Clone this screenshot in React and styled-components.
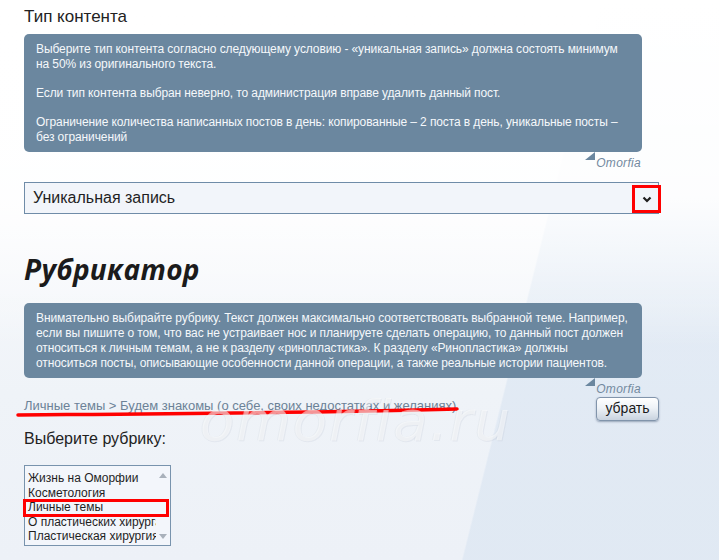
import React from 'react';
import styled, { createGlobalStyle } from 'styled-components';

const GlobalStyle = createGlobalStyle`
  html, body {
    margin: 0;
    padding: 0;
  }
  body {
    width: 719px;
    height: 560px;
    overflow: hidden;
    font-family: 'Liberation Sans', Arial, sans-serif;
    color: #222;
    background:
      linear-gradient(180deg, #ffffff 0%, rgba(255, 255, 255, 0.9) 35%, rgba(255, 255, 255, 0) 62%),
      linear-gradient(104deg, rgba(255, 255, 255, 0) 0%, rgba(255, 255, 255, 0) 70%, rgba(212, 225, 240, 0.5) 70.2%, rgba(212, 225, 240, 0.5) 100%),
      linear-gradient(180deg, #ffffff 0%, #f6f8fb 40%, #eff3f8 70%, #edf1f7 100%);
  }
`;

const Page = styled.div`
  position: relative;
  width: 635px;
  padding: 7px 0 0 24px;
`;

const SectionTitle = styled.div`
  font-size: 17px;
  line-height: 20px;
  color: #222;
`;

const Bubble = styled.div`
  position: relative;
  margin-top: ${(p) => p.$gap}px;
  width: 598px;
  padding: 8px 8px 7px 12px;
  background: #6b879f;
  border-radius: 5px;
  color: #f5f8fb;
  font-size: 12px;
  line-height: 15px;
  letter-spacing: -0.1px;

  p {
    margin: 0;
  }
  p + p {
    margin-top: 14px;
  }

  &::after {
    content: '';
    position: absolute;
    right: 47px;
    bottom: -8px;
    border-style: solid;
    border-width: 0 10px 8px 0;
    border-color: transparent #6b879f transparent transparent;
    transform: scaleY(-1);
  }
`;

const Signature = styled.div`
  margin-top: 3px;
  padding-right: 1px;
  width: 617px;
  text-align: right;
  font-size: 12px;
  line-height: 16px;
  font-style: italic;
  letter-spacing: 0.3px;
  color: #73899e;
`;

const SelectBox = styled.div`
  position: relative;
  margin-top: 11px;
  height: 30px;
  border: 1px solid #6f8ca8;
  background: #f2f5fa;
  display: flex;
  align-items: center;
  padding-left: 8px;
  font-size: 16px;
  color: #1f1f1f;
`;

const ArrowMark = styled.div`
  position: absolute;
  right: -3px;
  top: 2px;
  width: 23px;
  height: 22px;
  border: 3px solid #ff0000;
  display: flex;
  align-items: center;
  justify-content: center;
  background: #f2f5fa;
`;

const Heading = styled.h2`
  margin: 37px 0 0;
  font-family: 'Open Sans', 'Liberation Sans', sans-serif;
  font-size: 28px;
  line-height: 36px;
  font-weight: 700;
  font-style: italic;
  color: #1b1b1b;
  letter-spacing: 0.3px;
`;

const CrumbRow = styled.div`
  position: relative;
  display: flex;
  justify-content: space-between;
  align-items: flex-start;
  height: 24px;
`;

const Crumbs = styled.div`
  margin-top: 1px;
  font-size: 13px;
  line-height: 16px;
  color: #6c8297;
`;

const Underline = styled.svg`
  position: absolute;
  left: -8px;
  top: 9px;
`;

const SmallButton = styled.button`
  width: 63px;
  height: 24px;
  padding: 0 0 2px;
  border: 1px solid #8194ab;
  border-radius: 4px;
  background: linear-gradient(180deg, #ffffff 0%, #eef2f7 45%, #c9d3df 100%);
  box-shadow: 0 1px 2px rgba(60, 80, 110, 0.45);
  font-family: 'Liberation Sans', Arial, sans-serif;
  font-size: 14px;
  color: #1a1a1a;
`;

const FieldLabel = styled.div`
  margin-top: 8px;
  font-size: 16px;
  line-height: 20px;
  color: #222;
`;

const ListBox = styled.div`
  position: relative;
  margin-top: 16px;
  width: 145px;
  height: 79px;
  border: 1px solid #7893ad;
  background: #f3f6fb;
  display: flex;
`;

const ListItems = styled.div`
  width: 128px;
  padding: 5px 0 0 3px;
  overflow: hidden;
`;

const ListItem = styled.div`
  font-size: 12px;
  line-height: 14.5px;
  white-space: nowrap;
  color: #1f1f1f;
`;

const ItemMark = styled.div`
  position: absolute;
  left: -2px;
  top: 33px;
  width: 140px;
  height: 12px;
  border: 3px solid #ff0000;
`;

const ScrollBar = styled.div`
  width: 14px;
  display: flex;
  flex-direction: column;
  justify-content: space-between;
  align-items: center;
  padding: 7px 0 6px;
`;

const Watermark = styled.div`
  position: absolute;
  left: 200px;
  top: 388px;
  font-family: 'DejaVu Sans', sans-serif;
  font-size: 56px;
  font-style: italic;
  letter-spacing: 2px;
  color: rgba(255, 255, 255, 0.5);
  text-shadow: 1px 1px 0 rgba(165, 175, 190, 0.16), -1px 0 0 rgba(165, 175, 190, 0.1);
  pointer-events: none;
`;

const rubrics = [
  'Жизнь на Оморфии',
  'Косметология',
  'Личные темы',
  'О пластических хирургах',
  'Пластическая хирургия',
];

function Chevron() {
  return (
    <svg width="10" height="7" viewBox="0 0 10 7">
      <path d="M1.5 1.5 L5 5 L8.5 1.5" fill="none" stroke="#1e1e1e" strokeWidth="2.2" />
    </svg>
  );
}

function Arrow({ down }) {
  return (
    <svg width="8" height="5" viewBox="0 0 8 5">
      <path d={down ? 'M0 0 L8 0 L4 5 Z' : 'M0 5 L8 5 L4 0 Z'} fill="#a9b1bb" />
    </svg>
  );
}

export default function App() {
  return (
    <>
      <GlobalStyle />
      <Page>
        <SectionTitle>Тип контента</SectionTitle>
        <Bubble $gap={7}>
          <p>
            Выберите тип контента согласно следующему условию - «уникальная запись» должна состоять минимум
            <br />
            на 50% из оригинального текста.
          </p>
          <p>Если тип контента выбран неверно, то администрация вправе удалить данный пост.</p>
          <p>
            Ограничение количества написанных постов в день: копированные – 2 поста в день, уникальные посты –
            <br />
            без ограничений
          </p>
        </Bubble>
        <Signature>Omorfia</Signature>
        <SelectBox>
          Уникальная запись
          <ArrowMark>
            <Chevron />
          </ArrowMark>
        </SelectBox>

        <Heading>Рубрикатор</Heading>
        <Bubble $gap={16}>
          <p>
            Внимательно выбирайте рубрику. Текст должен максимально соответствовать выбранной теме. Например,
            <br />
            если вы пишите о том, что вас не устраивает нос и планируете сделать операцию, то данный пост должен
            <br />
            относиться к личным темам, а не к разделу «ринопластика». К разделу «Ринопластика» должны
            <br />
            относиться посты, описывающие особенности данной операции, а также реальные истории пациентов.
          </p>
        </Bubble>
        <Signature>Omorfia</Signature>
        <CrumbRow>
          <Crumbs>Личные темы &gt; Будем знакомы (о себе, своих недостатках и желаниях)</Crumbs>
          <Underline width="445" height="12" viewBox="0 0 445 12">
            <path d="M2 9 C 120 8, 300 7, 441 3" fill="none" stroke="#ff0000" strokeWidth="3.5" strokeLinecap="round" />
          </Underline>
          <SmallButton type="button">убрать</SmallButton>
        </CrumbRow>

        <FieldLabel>Выберите рубрику:</FieldLabel>
        <ListBox>
          <ListItems>
            {rubrics.map((r) => (
              <ListItem key={r}>{r}</ListItem>
            ))}
          </ListItems>
          <ScrollBar>
            <Arrow />
            <Arrow down />
          </ScrollBar>
          <ItemMark />
        </ListBox>

        <Watermark>omorfia.ru</Watermark>
      </Page>
    </>
  );
}
